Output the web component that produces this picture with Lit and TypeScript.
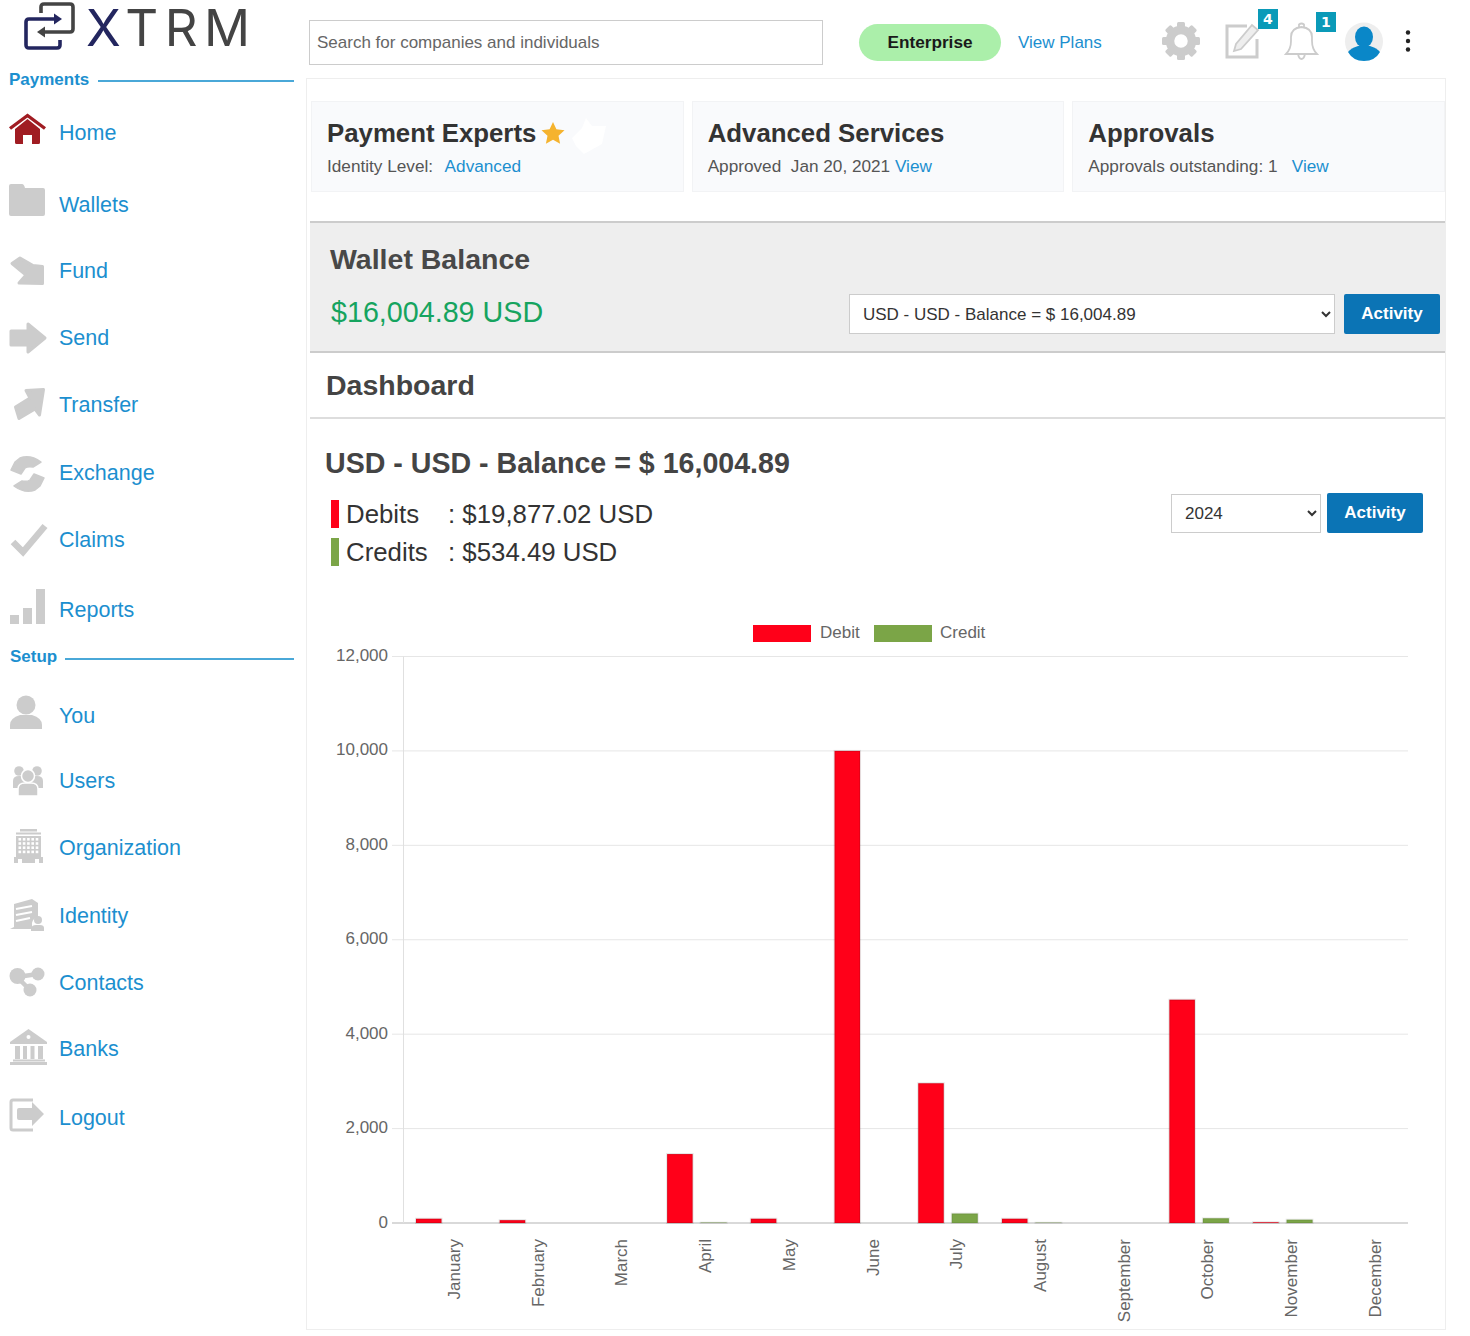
import { LitElement, html, css, svg } from "lit";
import { customElement } from "lit/decorators.js";

const windows = () => {
  const out = [];
  for (let r = 0; r < 4; r++)
    for (let c = 0; c < 5; c++)
      out.push(svg`<rect x=${10.5 + c * 4.3} y=${10 + r * 4.2} width="2.6" height="2.6" fill="#fff"></rect>`);
  return out;
};

const ICONS: Record<string, unknown> = {
  home: svg`<g fill="#a01c22"><path d="M7 16 19.5 6 32 16V29.500Q32 31 30.500 31H24V22H15V31H8.500Q7 31 7 29.500Z"></path></g><polyline points="2,15.500 19.500,2.500 37,15.500" fill="none" stroke="#a01c22" stroke-width="3.400"></polyline>`,
  wallets: svg`<path d="M3 -1H14Q16 -1 17 3H35Q37 3 37 5V29Q37 31 35 31H3Q1 31 1 29V1Q1 -1 3 -1Z"></path>`,
  fund: svg`<polygon points="4,12.500 12,7 25,14.500 34.500,15.500 34.500,32.500 11,32 18,24" stroke="#ccc" stroke-width="3" stroke-linejoin="round"></polygon>`,
  send: svg`<polygon points="3,13 20,13 20,6 37,20 20,34 20,27 3,27" stroke="#ccc" stroke-width="3" stroke-linejoin="round"></polygon>`,
  transfer: svg`<polygon points="35.500,4.500 18,5.500 22,13 7.500,22 11,33.500 27,24 31.500,30" stroke="#ccc" stroke-width="3" stroke-linejoin="round"></polygon>`,
  exchange: svg`<g><path d="M12 5Q22 1 33 9L25 14Q20 13 17 15L13 21 3 17 7 9Z" stroke="#ccc" stroke-width="1.500" stroke-linejoin="round"></path><path transform="rotate(180 19.500 21)" d="M12 5Q22 1 33 9L25 14Q20 13 17 15L13 21 3 17 7 9Z" stroke="#ccc" stroke-width="1.500" stroke-linejoin="round"></path></g>`,
  claims: svg`<polyline points="5,22 15,32 37,6" fill="none" stroke="#ccc" stroke-width="6.500"></polyline>`,
  reports: svg`<rect x="2" y="25" width="9" height="9"></rect><rect x="15" y="18" width="9" height="16"></rect><rect x="28" y="-1" width="9" height="35"></rect>`,
  you: svg`<circle cx="18" cy="9" r="9.500"></circle><path d="M2 33V29Q2 22 12 19H24Q34 22 34 29V33Z"></path>`,
  users: svg`<circle cx="11" cy="10" r="4.800"></circle><circle cx="29" cy="10" r="4.800"></circle><path d="M5 27V20Q5 15 11 15H29Q35 15 35 20V27Z"></path><circle cx="20" cy="15" r="6.500" stroke="#fff" stroke-width="1.500"></circle><path d="M10 35V28Q10 22 17 22H23Q30 22 30 28V35Z" stroke="#fff" stroke-width="1.500"></path>`,
  org: svg`<rect x="12" y="1" width="17" height="2.500"></rect><rect x="8" y="4.500" width="25" height="2"></rect><rect x="8" y="8" width="25" height="22"></rect>${windows()}<rect x="6" y="29" width="29" height="6"></rect><rect x="10" y="31" width="4" height="4" fill="#fff"></rect><rect x="27" y="31" width="4" height="4" fill="#fff"></rect>`,
  identity: svg`<path d="M6 8 24 3 30 7V21Q25 22 24 27V33H2L6 31Z"></path><path d="M8 13 24 10M8 19 24 16M8 25 22 22" stroke="#fff" stroke-width="2" fill="none"></path><circle cx="30" cy="24" r="4"></circle><path d="M23 35V32Q24 29 28 29H32Q36 29 36 32V35Z"></path>`,
  contacts: svg`<path d="M9 14 30 11M9 14 22 27" stroke="#ccc" stroke-width="4.500" fill="none"></path><circle cx="9.500" cy="13" r="8"></circle><circle cx="30" cy="11" r="6.500"></circle><circle cx="22" cy="27" r="6.500"></circle>`,
  banks: svg`<path d="M2 13 20.500 0 39 13V15H2Z"></path><circle cx="20.500" cy="8" r="2" fill="#fff"></circle><path d="M7 17H12V30H7ZM15 17H19V30H15ZM22.500 17H26.500V30H22.500ZM30 17H35V30H30Z"></path><rect x="5" y="30.500" width="32" height="2"></rect><rect x="2" y="33" width="37" height="3"></rect>`,
  logout: svg`<path d="M25 2H5Q3 2 3 4V30Q3 32 5 32H25" fill="none" stroke="#ccc" stroke-width="3"></path><path d="M11 10H24V4L36 16 24 28V22H11Q9 22 9 20V12Q9 10 11 10Z"></path>`,
};

const NAV_PAYMENTS = [
  { label: "Home", icon: "home", mt: 25 },
  { label: "Wallets", icon: "wallets", mt: 32 },
  { label: "Fund", icon: "fund", mt: 26 },
  { label: "Send", icon: "send", mt: 27 },
  { label: "Transfer", icon: "transfer", mt: 27 },
  { label: "Exchange", icon: "exchange", mt: 28 },
  { label: "Claims", icon: "claims", mt: 27 },
  { label: "Reports", icon: "reports", mt: 30 },
];
const NAV_SETUP = [
  { label: "You", icon: "you", mt: 31 },
  { label: "Users", icon: "users", mt: 25 },
  { label: "Organization", icon: "org", mt: 27 },
  { label: "Identity", icon: "identity", mt: 28 },
  { label: "Contacts", icon: "contacts", mt: 27 },
  { label: "Banks", icon: "banks", mt: 26 },
  { label: "Logout", icon: "logout", mt: 29 },
];

const MONTHS = ["January", "February", "March", "April", "May", "June", "July", "August", "September", "October", "November", "December"];
const DEBIT = [90, 60, 0, 1460, 90, 10000, 2960, 90, 0, 4730, 15, 0];
const CREDIT = [0, 0, 0, 8, 0, 0, 200, 6, 0, 100, 70, 0];
const TICKS = [0, 2000, 4000, 6000, 8000, 10000, 12000];

const X0 = 403.5;
const X1 = 1408;
const Y0 = 1223;
const PER = (1223 - 656.5) / 12000;
const STEP = (X1 - X0) / 12;

@customElement("app-root")
export class AppRoot extends LitElement {
  static styles = css`
    :host { display: block; width: 1470px; height: 1336px; background: #fff; font-family: "Liberation Sans", Arial, sans-serif; color: #333; overflow: hidden; }
    * { box-sizing: border-box; }
    a { color: #1c8fcf; text-decoration: none; }
    .app { display: grid; grid-template-columns: 306px 1fr; }
    .side { padding-right: 12px; }
    .logo { height: 70px; display: flex; align-items: flex-start; padding-left: 24px; }
    .logo svg { display: block; margin-top: 2px; }
    .word { margin-left: 11px; font-family: Inter, sans-serif; font-weight: 400; font-size: 51px; line-height: 55px; letter-spacing: 6.5px; color: #444; white-space: nowrap; }
    .word b { font-weight: 400; color: #23265f; }
    .sec { display: flex; align-items: center; height: 18px; padding: 2px 0 0 9px; font-size: 17px; font-weight: 700; color: #1c8fcf; }
    .sec i { flex: 1; height: 2px; margin: 2px 0 0 9px; background: #4aa8d8; }
    .sec.setup { padding-left: 10px; margin-top: 17px; }
    .sec.setup i { margin: 4px 0 0 8px; }
    .item { display: flex; align-items: center; height: 40px; padding-left: 8px; font-size: 21.5px; color: #1c8fcf; }
    .item svg { flex: none; width: 40px; height: 40px; overflow: visible; fill: #ccc; margin-right: 11px; }

    .top { height: 78px; padding: 7px 0 0 3px; display: flex; align-items: center; }
    .search { width: 514px; height: 45px; padding: 0 0 0 7px; border: 1px solid #ccc; font: 17px "Liberation Sans", Arial, sans-serif; color: #666; background: #fff; outline: none; }
    .search::placeholder { color: #666; opacity: 1; }
    .plan { width: 142px; height: 37px; margin-left: 36px; border-radius: 19px; background: #abefaa; color: #1a1a1a; font-size: 17.2px; font-weight: 700; display: flex; align-items: center; justify-content: center; }
    .plans { margin-left: 17px; font-size: 17px; }
    .icons { display: flex; align-items: center; margin: -3px 0 0 59px; }
    .hi { position: relative; display: block; }
    .hi svg { display: block; overflow: visible; }
    .note { margin-left: 24px; }
    .bell { margin-left: 21px; }
    .ava { margin-left: 26px; }
    .keb { margin-left: 22px; }
    .badge { position: absolute; width: 20px; height: 20px; background: #0a9ab8; color: #fff; font: 700 14px/20px "DejaVu Sans", sans-serif; text-align: center; }
    .b4 { left: 33px; top: -13px; }
    .b1 { left: 32px; top: -10px; }

    .panel { width: 1140px; height: 1252px; border: 1px solid #eee; padding-top: 22px; }
    .cards { display: grid; grid-template-columns: repeat(3, 1fr); gap: 8px; padding-left: 4px; }
    .card { position: relative; height: 91px; padding: 15px 0 0 15px; background: #f9fafc; border: 1px solid #f2f3f5; }
    .card h3 { margin: 0; font-size: 25.8px; line-height: 32px; font-weight: 700; color: #333; display: flex; align-items: center; }
    .card h3 svg { margin-left: 5px; }
    .smudge { position: absolute; left: 258px; top: 14px; }
    .card p { margin: 7px 0 0; font-size: 17.2px; line-height: 20px; color: #555; white-space: pre; }
    .adv { margin-left: 2px; }
    .band { margin: 29px 0 0 3px; height: 132px; padding: 0 5px 0 20px; background: #eee; border-top: 2px solid #ccc; border-bottom: 2px solid #ccc; display: flex; justify-content: space-between; align-items: flex-end; }
    .band h2 { margin: 19px 0 0; font-size: 28.5px; line-height: 34px; color: #484848; }
    .money { margin: 19px 0 22px 1px; font-size: 28.7px; line-height: 34px; color: #16a45f; }
    .ctl { display: flex; gap: 9px; margin-bottom: 17px; }
    select { height: 40px; padding-left: 9px; border: 1px solid #ccc; background: #fff; color: #333; font: 17px "Liberation Sans", Arial, sans-serif; border-radius: 0; }
    .s1 { width: 486px; }
    .s2 { width: 150px; }
    .btn { width: 96px; height: 40px; border-radius: 2px; background: #0b74b5; color: #fff; font-size: 17px; font-weight: 700; display: flex; align-items: center; justify-content: center; }
    .dash { margin-left: 3px; height: 66px; padding-left: 16px; border-bottom: 2px solid #ddd; font-size: 28.5px; font-weight: 700; line-height: 64px; color: #444; }
    .bal { margin: 27px 0 0 18px; font-size: 28.6px; font-weight: 700; line-height: 34px; color: #444; }
    .sum { margin-top: 13px; padding: 0 22px 0 24px; display: flex; justify-content: space-between; align-items: flex-start; }
    .rows { padding-top: 2px; }
    .row { display: flex; align-items: center; height: 38px; font-size: 25.8px; color: #333; }
    .mark { width: 8px; height: 28px; margin-right: 7px; }
    .red { background: #ff0019; }
    .green { background: #7ba547; }
    .lab { width: 102px; }
    .ctl2 { display: flex; gap: 6px; align-items: flex-start; }
    .ctl2 select { margin-top: 1px; height: 39px; }
    .chart { display: block; margin-top: 39px; }
    .chart text { font: 17px "Liberation Sans", Arial, sans-serif; fill: #666; }
  `;

  private navItem(n: { label: string; icon: string; mt: number }) {
    return html`<div class="item" style="margin-top:${n.mt}px"><svg viewBox="0 0 40 40">${ICONS[n.icon]}</svg><span>${n.label}</span></div>`;
  }

  private gear() {
    const teeth = [0, 45, 90, 135, 180, 225, 270, 315].map(
      (a) => svg`<rect x="16" y="1" width="8" height="8" rx="1.500" fill="#ccc" transform="rotate(${a} 20 20)"></rect>`
    );
    return html`<svg width="40" height="40" viewBox="0 0 40 40">${teeth}<circle cx="20" cy="20" r="11" fill="none" stroke="#ccc" stroke-width="8.500"></circle></svg>`;
  }

  private chart() {
    return html`<svg class="chart" width="1138" height="720" viewBox="307 610 1138 720">
      <rect x="753" y="625" width="58" height="17" fill="#ff0019"></rect>
      <text x="820" y="638">Debit</text>
      <rect x="874" y="625" width="58" height="17" fill="#7ba547"></rect>
      <text x="940" y="638">Credit</text>
      ${TICKS.map((t) => {
        const y = Y0 - t * PER;
        return svg`<line x1="392" x2=${X1} y1=${y} y2=${y} stroke=${t === 0 ? "#ccc" : "#e6e6e6"} stroke-width=${t === 0 ? 1.5 : 1}></line>
        <text x="388" y=${y + 4.5} text-anchor="end">${t.toLocaleString("en-US")}</text>`;
      })}
      <line x1=${X0} x2=${X0} y1="656.500" y2=${Y0} stroke="#e0e0e0"></line>
      ${MONTHS.map((m, i) => {
        const base = X0 + i * STEP;
        const d = DEBIT[i] * PER;
        const c = CREDIT[i] * PER;
        return svg`
          ${d > 0 ? svg`<rect x=${base + 12.5} y=${Y0 - d} width="25.500" height=${d} fill="#ff0019" stroke="rgba(0,0,0,.1)" stroke-width="2"></rect>` : ""}
          ${c > 0 ? svg`<rect x=${base + 46} y=${Y0 - c} width="26" height=${c} fill="#7ba547" stroke="rgba(0,0,0,.08)" stroke-width="2"></rect>` : ""}
          <text text-anchor="end" transform="translate(${base + 56.5} 1239) rotate(-90)">${m}</text>`;
      })}
    </svg>`;
  }

  render() {
    return html`<div class="app">
      <aside class="side">
        <div class="logo">
          <svg width="51" height="50" viewBox="0 0 51 50" fill="none">
            <path d="M17 11V5Q17 2 20 2H46Q49 2 49 5V27Q49 30 46 30H18" stroke="#444" stroke-width="3.600"></path>
            <path d="M13 30 21 24.500V35.500Z" fill="#444"></path>
            <path d="M36 38V43Q36 46 33 46H5Q2 46 2 43V20Q2 17 5 17H32" stroke="#23265f" stroke-width="3.600"></path>
            <path d="M38 17 30 11.500V22.500Z" fill="#23265f"></path>
          </svg>
          <div class="word"><b>X</b>TRM</div>
        </div>
        <div class="sec">Payments<i></i></div>
        ${NAV_PAYMENTS.map((n) => this.navItem(n))}
        <div class="sec setup">Setup<i></i></div>
        ${NAV_SETUP.map((n) => this.navItem(n))}
      </aside>
      <main>
        <header class="top">
          <input class="search" placeholder="Search for companies and individuals" />
          <div class="plan">Enterprise</div>
          <a class="plans">View Plans</a>
          <div class="icons">
            <span class="hi">${this.gear()}</span>
            <span class="hi note">
              <svg width="38" height="38" viewBox="0 0 38 38" fill="none">
                <path d="M32 17V35H2V4H22" stroke="#ccc" stroke-width="3"></path>
                <path d="M9 29 11 22 27 3 33 8 16 27Z" stroke="#ccc" stroke-width="1.800" fill="#eee"></path>
              </svg>
              <span class="badge b4">4</span>
            </span>
            <span class="hi bell">
              <svg width="35" height="38" viewBox="0 0 35 38" fill="none" stroke="#ccc" stroke-width="1.800">
                <path d="M2 32Q7 27 7 19V15Q7 6 17.500 5Q28 6 28 15V19Q28 27 33 32Z"></path>
                <path d="M15 5V2.500Q17.500 0.500 20 2.500V5M14 32Q15 37 17.500 37Q20 37 21 32"></path>
              </svg>
              <span class="badge b1">1</span>
            </span>
            <span class="hi ava">
              <svg width="38" height="39" viewBox="0 0 38 39">
                <circle cx="19" cy="19.500" r="19" fill="#eee"></circle>
                <ellipse cx="19" cy="15" rx="9" ry="10.500" fill="#0a87c8"></ellipse>
                <path d="M3 30Q6 26 13 24H25Q32 26 35 30Q30 39 19 39Q8 39 3 30Z" fill="#0a87c8"></path>
              </svg>
            </span>
            <span class="hi keb">
              <svg width="6" height="24" viewBox="0 0 6 24" fill="#222">
                <circle cx="3" cy="3.500" r="2.200"></circle><circle cx="3" cy="12" r="2.200"></circle><circle cx="3" cy="20.500" r="2.200"></circle>
              </svg>
            </span>
          </div>
        </header>
        <section class="panel">
          <div class="cards">
            <div class="card">
              <h3>Payment Experts
                <svg width="24" height="24" viewBox="0 0 24 24"><polygon points="12,1 15.400,8.300 23.500,9.300 17.500,14.800 19.100,22.800 12,18.800 4.900,22.800 6.500,14.800 0.500,9.300 8.600,8.300" fill="#f5b32e"></polygon></svg>
              </h3>
              <svg class="smudge" width="38" height="40" viewBox="0 0 38 40"><path d="M2 22 12 12 16 2 22 10 36 10 32 28 14 38 6 30Z" fill="#fff"></path></svg>
              <p>Identity Level:  <a class="adv">Advanced</a></p>
            </div>
            <div class="card">
              <h3>Advanced Services</h3>
              <p>Approved  Jan 20, 2021 <a>View</a></p>
            </div>
            <div class="card">
              <h3>Approvals</h3>
              <p>Approvals outstanding: 1   <a>View</a></p>
            </div>
          </div>
          <div class="band">
            <div>
              <h2>Wallet Balance</h2>
              <div class="money">$16,004.89 USD</div>
            </div>
            <div class="ctl">
              <select class="s1"><option>USD - USD - Balance = $ 16,004.89</option></select>
              <div class="btn">Activity</div>
            </div>
          </div>
          <div class="dash">Dashboard</div>
          <div class="bal">USD - USD - Balance = $ 16,004.89</div>
          <div class="sum">
            <div class="rows">
              <div class="row"><span class="mark red"></span><span class="lab">Debits</span>: $19,877.02 USD</div>
              <div class="row"><span class="mark green"></span><span class="lab">Credits</span>: $534.49 USD</div>
            </div>
            <div class="ctl2">
              <select class="s2"><option>2024</option></select>
              <div class="btn">Activity</div>
            </div>
          </div>
          ${this.chart()}
        </section>
      </main>
    </div>`;
  }
}
